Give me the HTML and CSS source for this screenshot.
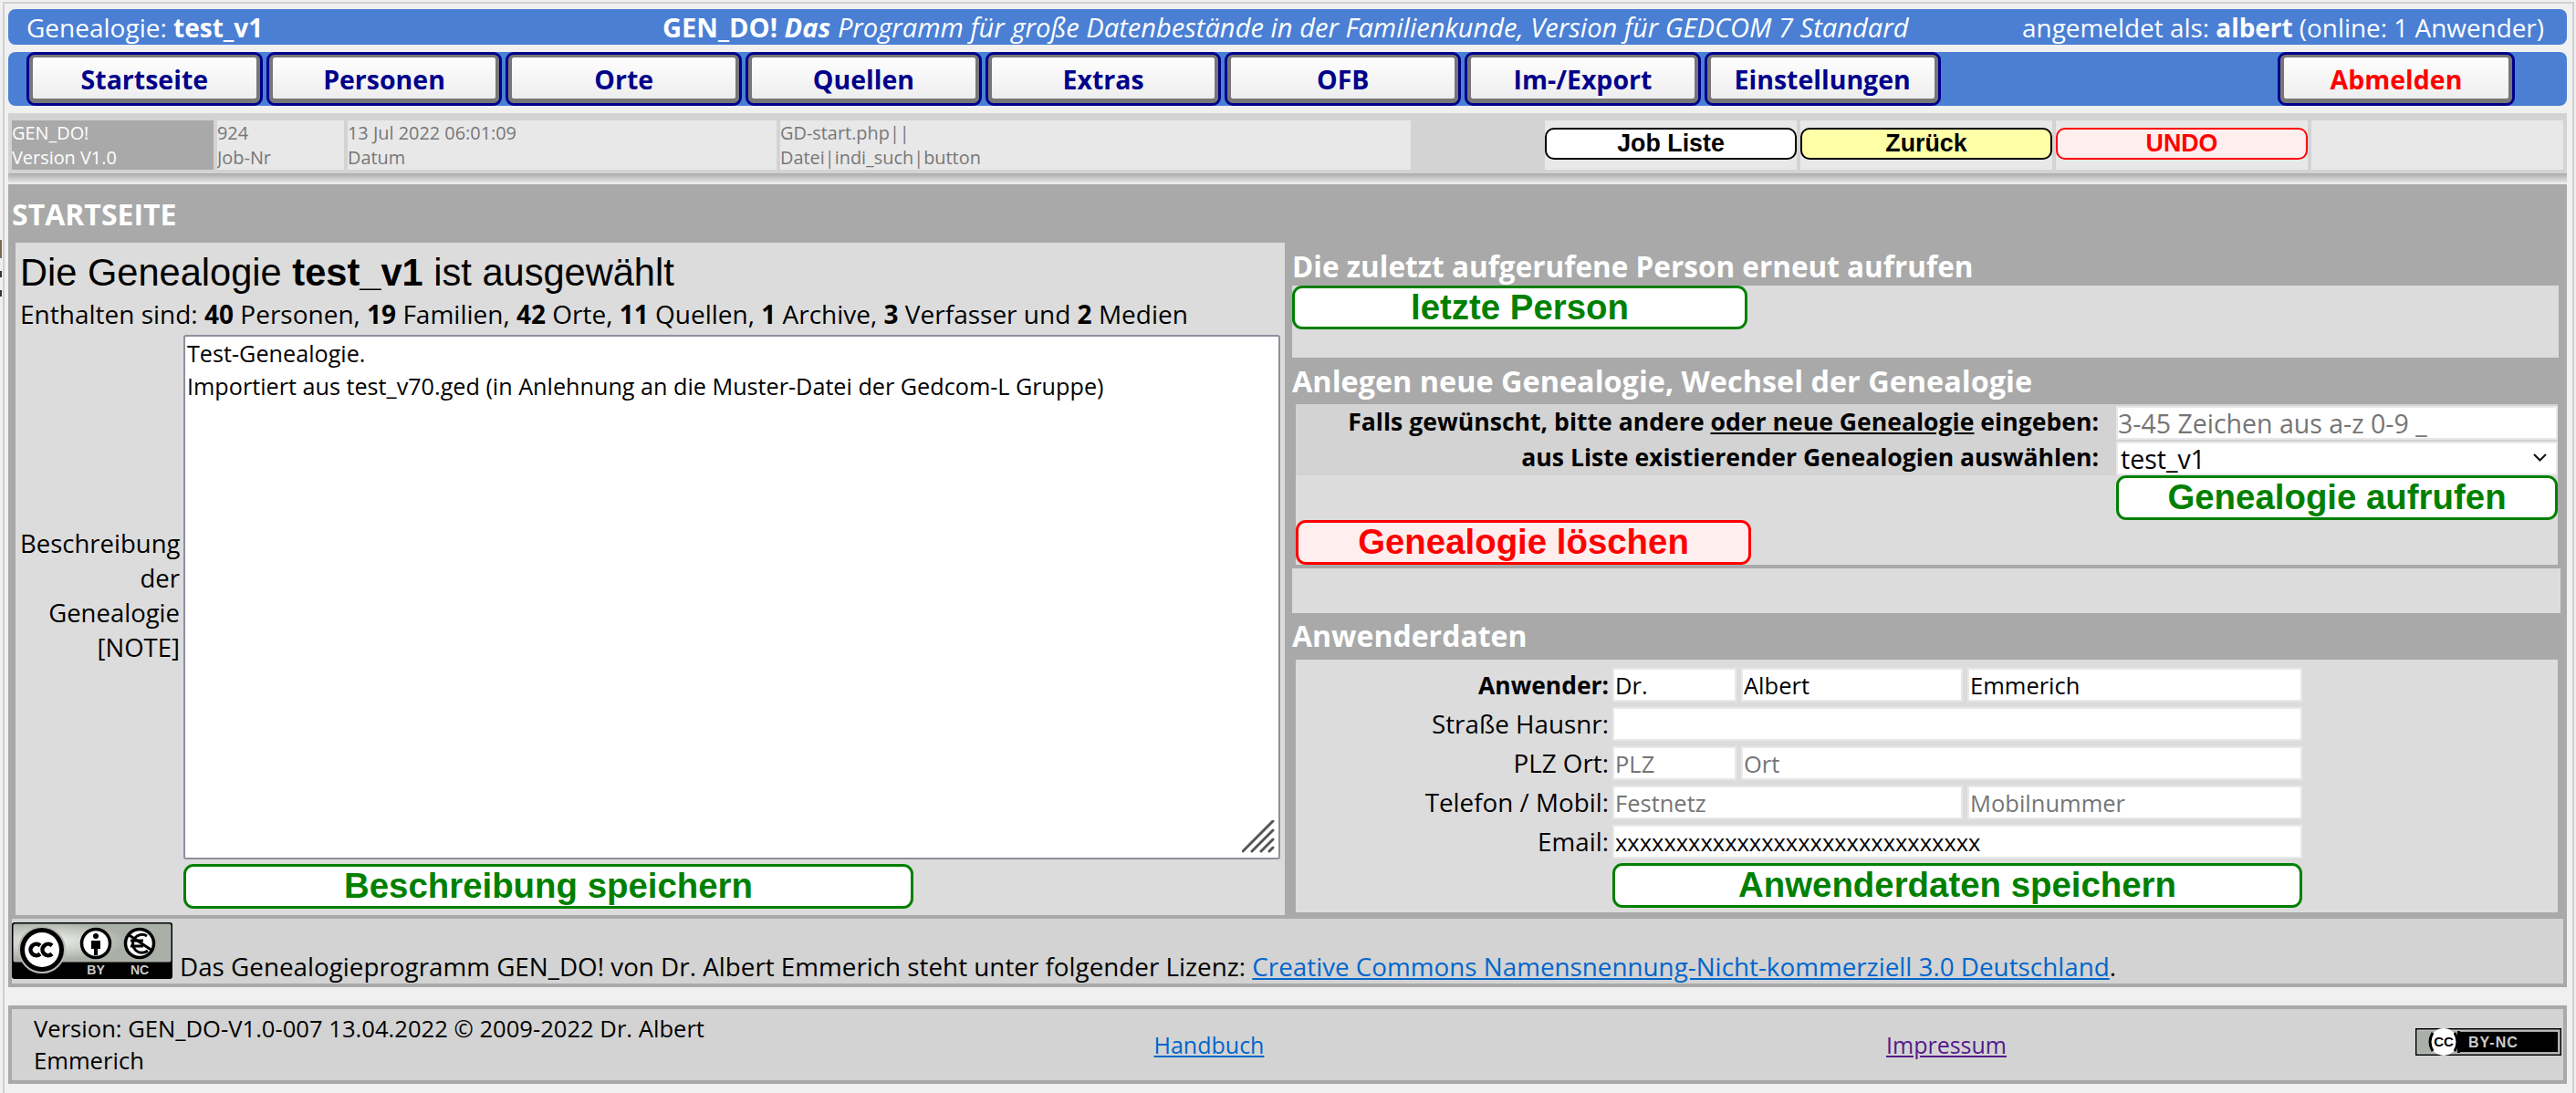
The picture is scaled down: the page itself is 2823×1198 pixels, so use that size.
FILE: index.html
```html
<!DOCTYPE html>
<html lang="de">
<head>
<meta charset="utf-8">
<title>GEN_DO! Startseite</title>
<link rel="stylesheet" href="styles.css">
</head>
<body>
<div class="edge-marks"><i></i><i></i><i></i></div>
<div class="frame">
  <header class="topbar">
    <div class="top-left">Genealogie: <b>test_v1</b></div>
    <div class="top-center"><b>GEN_DO! <i>Das</i></b> <i>Programm für große Datenbestände in der Familienkunde, Version für GEDCOM 7 Standard</i></div>
    <div class="top-right">angemeldet als: <b>albert</b> (online: 1 Anwender)</div>
  </header>
  <nav class="navbar">
    <a class="nav-btn">Startseite</a>
    <a class="nav-btn">Personen</a>
    <a class="nav-btn">Orte</a>
    <a class="nav-btn">Quellen</a>
    <a class="nav-btn">Extras</a>
    <a class="nav-btn">OFB</a>
    <a class="nav-btn">Im-/Export</a>
    <a class="nav-btn">Einstellungen</a>
    <a class="nav-btn logout">Abmelden</a>
  </nav>
  <section class="jobrow">
    <div class="cell cell-dark">GEN_DO!<br>Version V1.0</div>
    <div class="cell">924<br>Job-Nr</div>
    <div class="cell">13 Jul 2022 06:01:09<br>Datum</div>
    <div class="cell">GD-start.php||<br>Datei|indi_such|button</div>
    <div class="cell-empty"></div>
    <div class="cell cell-btn"><button class="job-btn white">Job Liste</button></div>
    <div class="cell cell-btn"><button class="job-btn yellow">Zurück</button></div>
    <div class="cell cell-btn"><button class="job-btn red">UNDO</button></div>
    <div class="cell"></div>
  </section>
  <div class="strip"></div>
  <main class="main">
    <h1 class="page-title">STARTSEITE</h1>
    <div class="columns">
      <section class="left">
        <h2 class="gen-title">Die Genealogie <b>test_v1</b> ist ausgewählt</h2>
        <p class="counts">Enthalten sind: <b>40</b> Personen, <b>19</b> Familien, <b>42</b> Orte, <b>11</b> Quellen, <b>1</b> Archive, <b>3</b> Verfasser und <b>2</b> Medien</p>
        <div class="note-row">
          <label class="note-label">Beschreibung<br>der<br>Genealogie<br>[NOTE]</label>
          <div class="note-wrap">
            <textarea class="note">Test-Genealogie.
Importiert aus test_v70.ged (in Anlehnung an die Muster-Datei der Gedcom-L Gruppe)</textarea>
            <svg class="grip" viewBox="0 0 36 36"><path d="M1 34L34 1M11 34L34 11M21 34L34 21M30 34L34 30"/></svg>
          </div>
        </div>
        <button class="act-btn green note-save">Beschreibung speichern</button>
      </section>
      <section class="right">
        <h3 class="sec-title first">Die zuletzt aufgerufene Person erneut aufrufen</h3>
        <div class="box box-last"><button class="act-btn green last-btn">letzte Person</button></div>
        <h3 class="sec-title second">Anlegen neue Genealogie, Wechsel der Genealogie</h3>
        <div class="box box-gen">
          <div class="gen-rows">
            <label class="gen-label"><b>Falls gewünscht, bitte andere <u>oder neue Genealogie</u> eingeben:</b></label>
            <input class="field gen-field" placeholder="3-45 Zeichen aus a-z 0-9 _">
            <label class="gen-label"><b>aus Liste existierender Genealogien auswählen:</b></label>
            <div class="select-wrap">
              <select class="field gen-field select"><option>test_v1</option></select>
              <svg class="chevron" viewBox="0 0 15 9"><path d="M1 1l6.5 6.5L14 1"/></svg>
            </div>
          </div>
          <div class="gen-open"><button class="act-btn green open-btn">Genealogie aufrufen</button></div>
          <button class="act-btn danger del-btn">Genealogie löschen</button>
        </div>
        <div class="box box-empty"></div>
        <h3 class="sec-title third">Anwenderdaten</h3>
        <div class="box box-user">
          <div class="user-grid">
            <label class="u-label"><b>Anwender:</b></label>
            <div class="u-row"><input class="field w-a" value="Dr."><input class="field w-b" value="Albert"><input class="field w-c" value="Emmerich"></div>
            <label class="u-label">Straße Hausnr:</label>
            <div class="u-row"><input class="field w-full"></div>
            <label class="u-label">PLZ Ort:</label>
            <div class="u-row"><input class="field w-a" placeholder="PLZ"><input class="field w-ort" placeholder="Ort"></div>
            <label class="u-label">Telefon / Mobil:</label>
            <div class="u-row"><input class="field w-tel" placeholder="Festnetz"><input class="field w-c" placeholder="Mobilnummer"></div>
            <label class="u-label">Email:</label>
            <div class="u-row"><input class="field w-full" value="xxxxxxxxxxxxxxxxxxxxxxxxxxxxxx"></div>
            <span></span>
            <button class="act-btn green user-save">Anwenderdaten speichern</button>
          </div>
        </div>
      </section>
    </div>
  </main>
  <section class="license">
    <svg class="cc-big" viewBox="0 0 176 62" aria-label="CC BY-NC">
      <defs>
        <radialGradient id="halo" cx="0.22" cy="0.45" r="0.5">
          <stop offset="0" stop-color="#f4f5f2"/><stop offset="0.5" stop-color="#d0d3cc"/><stop offset="1" stop-color="#aab0a8"/>
        </radialGradient>
      </defs>
      <rect x="0" y="0" width="176" height="62" rx="3" fill="#000"/>
      <rect x="1.5" y="1.5" width="173" height="42" rx="2" fill="url(#halo)"/>
      <circle cx="33" cy="30" r="25" fill="#000" stroke="#b5b9b2" stroke-width="2"/>
      <circle cx="33" cy="30" r="19" fill="#fff"/>
      <path class="cc-c" d="M31 25.5a6.2 6.2 0 1 0 0 9"/>
      <path class="cc-c" d="M44 25.5a6.2 6.2 0 1 0 0 9"/>
      <circle cx="92" cy="23" r="15.5" fill="#fff" stroke="#000" stroke-width="3.5"/>
      <circle cx="92" cy="15" r="3" fill="#000"/>
      <path d="M87 20h10v9h-3v7h-4v-7h-3z" fill="#000"/>
      <circle cx="140" cy="23" r="15.5" fill="#fff" stroke="#000" stroke-width="3.5"/>
      <path class="cc-e" d="M148 15a10 10 0 1 0 1 16M130 20h14M130 26h14"/>
      <path class="cc-e" d="M127 13l27 18"/>
      <text class="cc-txt" x="92" y="57" text-anchor="middle">BY</text>
      <text class="cc-txt" x="140" y="57" text-anchor="middle">NC</text>
    </svg>
    <span class="lic-text">Das Genealogieprogramm GEN_DO! von Dr. Albert Emmerich steht unter folgender Lizenz: <a class="lic-link" href="#">Creative Commons Namensnennung-Nicht-kommerziell 3.0 Deutschland</a>.</span>
  </section>
  <footer class="footer">
    <div class="foot-version">Version: GEN_DO-V1.0-007 13.04.2022 © 2009-2022 Dr. Albert Emmerich</div>
    <div class="foot-link"><a class="link-blue" href="#">Handbuch</a></div>
    <div class="foot-link"><a class="link-visited" href="#">Impressum</a></div>
    <span></span>
    <svg class="cc-small" viewBox="0 0 160 30" aria-label="CC BY-NC">
      <rect width="160" height="30" fill="#000"/>
      <rect x="2" y="2" width="156" height="26" fill="#aab0a8" stroke="#ccc" stroke-width="1"/>
      <rect x="48" y="4" width="108" height="22" fill="#000"/>
      <circle cx="31" cy="15" r="15" fill="#fff"/>
      <rect x="46" y="3" width="3" height="24" fill="#000"/>
      <path class="cc-s" d="M19 5q-6 10 0 20M43 5q6 10 0 20"/>
      <text class="cc-txt-s" x="31" y="20" text-anchor="middle">CC</text>
      <text class="cc-txt-w" x="58" y="21">BY-NC</text>
    </svg>
  </footer>
</div>
</body>
</html>
```
FILE: styles.css
```css
* { box-sizing: border-box; }
html, body { margin: 0; padding: 0; }
body {
  background: #f0f0f0;
  font-family: "Open Sans", "Noto Sans", sans-serif;
  font-size: 28px;
  color: #000;
  overflow: hidden;
}
.edge-marks {
  position: absolute;
  left: 0;
  top: 263px;
  width: 2px;
  height: 62px;
  display: flex;
  flex-direction: column;
  gap: 14px;
}
.edge-marks i { display: block; height: 7px; background: #333; }
.edge-marks i:first-child { height: 20px; background: #7a6a50; }
.frame {
  margin: 2px 2px 0 3px;
  border: 2px solid #d0d0d0;
  border-bottom: 0;
  padding: 6px 6px 0 4px;
  height: 1196px;
}
.topbar {
  display: grid;
  grid-template-columns: 717px 1fr auto;
  align-items: center;
  height: 39px;
  background: #4a7fd4;
  border-radius: 8px;
  color: #fff;
  margin-bottom: 8px;
  white-space: nowrap;
}
.top-left { padding-left: 20px; }
.top-center { font-size: 29.1px; }
.top-right { padding-right: 25px; font-size: 27.9px; }
.navbar {
  display: flex;
  gap: 4px;
  height: 59px;
  background: #4a7fd4;
  border-radius: 8px;
  padding: 0 57px 0 20px;
  margin-bottom: 8px;
}
.nav-btn {
  width: 258.7px;
  display: flex;
  align-items: center;
  justify-content: center;
  border: 3.5px solid #00008b;
  border-radius: 9px;
  box-shadow: inset 0 0 0 3px #777, inset 0 -1px 0 4px #777;
  background: linear-gradient(#fff, #ececec);
  color: #00008b;
  font-weight: 700;
  font-size: 28.5px;
}
.nav-btn.logout { margin-left: auto; color: #f00; width: 260px; }
.jobrow {
  display: grid;
  grid-template-columns: 221px 139px 470px 691px 139px 276px 276px 276px 1fr;
  column-gap: 4px;
  height: 66px;
  background: #d3d3d3;
  padding: 8px 4px 4px;
}
.cell {
  background: #e8e8e8;
  color: #777;
  font-size: 19.9px;
  line-height: 27px;
  white-space: nowrap;
  overflow: hidden;
}
.cell-dark { background: #a9a9a9; color: #fff; }
.cell-btn { display: flex; align-items: center; }
.job-btn {
  width: 100%;
  height: 35px;
  border: 2.5px solid #000;
  border-radius: 10px;
  font: 700 26.8px/1 "Liberation Sans", Arial, sans-serif;
  padding: 0;
  margin-top: -4px;
  color: #000;
}
.job-btn.white { background: #fff; }
.job-btn.yellow { background: #ffffa8; }
.job-btn.red { background: #ffeeee; border-color: #f00; color: #f00; }
.strip { height: 12px; background: linear-gradient(#aaa, #f0f0f0); }
.main { background: #a9a9a9; height: 801px; padding-top: 1px; }
.page-title {
  margin: 0;
  height: 63px;
  padding: 13px 0 0 4px;
  font-size: 32px;
  line-height: 38px;
  font-weight: 700;
  color: #fff;
}
.columns { display: flex; }
.left {
  width: 1391px;
  height: 737px;
  margin-left: 8px;
  background: #dcdcdc;
  padding-left: 5px;
}
.gen-title {
  margin: 0;
  padding-top: 11px;
  font: 400 41.6px/44px "Liberation Sans", Arial, sans-serif;
}
.counts { margin: 0; padding-top: 6px; height: 46px; line-height: 34px; white-space: nowrap; }
.note-row { display: flex; height: 575px; }
.note-label {
  width: 175px;
  align-self: center;
  text-align: right;
  line-height: 38px;
  flex: none;
  font-size: 27.5px;
  padding-bottom: 4px;
}
.note-wrap { position: relative; margin-left: 4px; width: 1202px; height: 575px; }
.note {
  display: block;
  width: 100%;
  height: 100%;
  margin: 0;
  border: 2px solid #8f8f9d;
  border-radius: 3px;
  padding: 0 2px;
  font: 25.2px/36px "Open Sans", sans-serif;
  background: #fff;
  resize: none;
}
.grip {
  position: absolute;
  right: 6px;
  bottom: 7px;
  width: 36px;
  height: 36px;
}
.grip path { fill: none; stroke: #555; stroke-width: 3; stroke-linecap: round; }
.act-btn {
  font: 700 38.4px/1 "Liberation Sans", Arial, sans-serif;
  background: #fff;
  height: 49px;
  border: 3px solid #008000;
  border-radius: 11px;
  padding: 0;
  color: #008000;
}
.act-btn.danger { background: #ffeeee; border-color: #f00; color: #f00; }
.note-save { display: block; width: 800px; margin: 5px 0 0 179px; }
.right { width: 1390px; margin-left: 8px; }
.sec-title {
  margin: 0;
  font-size: 32px;
  font-weight: 700;
  color: #fff;
  white-space: nowrap;
}
.sec-title.first { height: 47px; line-height: 51px; font-size: 31.5px; }
.sec-title.second { height: 51px; line-height: 51px; font-size: 32.4px; }
.sec-title.third { height: 51px; line-height: 50px; }
.box { background: #dcdcdc; }
.box-last { height: 79px; width: 1388px; }
.last-btn { display: block; width: 499px; height: 48px; }
.box-gen { width: 1383px; height: 176px; margin-left: 4px; }
.gen-rows {
  display: grid;
  grid-template-columns: 899px 484px;
  grid-auto-rows: 39px;
  background: #d3d3d3;
  padding: 0;
  height: 78px;
}
.gen-label { text-align: right; padding-right: 19px; line-height: 39px; white-space: nowrap; font-size: 26.6px; }
.field {
  height: 37px;
  margin: 0;
  border: 2px solid #e8e8e8;
  background: #fff;
  padding: 0 1px;
  font: 25.5px "Open Sans", sans-serif;
  color: #000;
  border-radius: 0;
  outline: 0;
}
.gen-field { width: 484px; margin-top: 2px; font-size: 28.5px; padding: 0; }
.select-wrap { position: relative; }
.select { padding-left: 3px; appearance: none; display: block; line-height: 30px; }
.chevron {
  position: absolute;
  left: 457px;
  top: 15px;
  width: 15px;
  height: 9px;
}
.chevron path { fill: none; stroke: #111; stroke-width: 2; }
.gen-open { display: flex; justify-content: flex-end; }
.open-btn { width: 484px; }
.del-btn { display: block; width: 499px; }
.box-empty { width: 1390px; height: 49px; margin-top: 4px; }
.box-user { width: 1383px; height: 277px; margin-left: 4px; padding-top: 9px; }
.user-grid {
  display: grid;
  grid-template-columns: 343px 756px;
  grid-auto-rows: 37px;
  row-gap: 6px;
  column-gap: 4px;
}
.u-label { text-align: right; line-height: 37px; white-space: nowrap; font-size: 27.8px; }
.u-label b { font-size: 26.4px; }
.u-row { display: flex; gap: 5px; }
.w-a { width: 136px; }
.w-b { width: 243px; }
.w-c { width: 367px; }
.w-ort { width: 615px; }
.w-tel { width: 384px; }
.w-full { width: 756px; }
.user-save { width: 756px; height: 49px; margin-top: -1px; }
.license {
  height: 79px;
  border: 4px solid #a9a9a9;
  background: #d3d3d3;
  display: flex;
  align-items: flex-end;
  white-space: nowrap;
}
.cc-big { width: 176px; height: 62px; flex: none; margin: 0 8px 5px 0; }
.cc-c { fill: none; stroke: #000; stroke-width: 4.5; }
.cc-e { fill: none; stroke: #000; stroke-width: 3; }
.cc-txt { font: 700 14px "Liberation Sans", sans-serif; fill: #ccc; }
.lic-text { line-height: 38px; font-size: 27.8px; }
.lic-link { color: #0066cc; }
.footer {
  margin-top: 20px;
  height: 86px;
  border: 4px solid #a9a9a9;
  background: #d3d3d3;
  display: grid;
  grid-template-columns: 780px 1016px 600px 1fr auto;
  align-items: center;
  padding: 0 2px 0 24px;
  font-size: 25.6px;
}
.foot-version { line-height: 35px; }
.foot-link { text-align: center; font-size: 25px; }
.link-blue { color: #0066cc; }
.link-visited { color: #551a8b; }
.cc-small { width: 160px; height: 30px; margin-top: -6px; }
.cc-s { fill: none; stroke: #000; stroke-width: 3; }
.cc-txt-s { font: 700 15px "Liberation Sans", sans-serif; fill: #000; }
.cc-txt-w { font: 700 16px "Liberation Sans", sans-serif; fill: #ccc; letter-spacing: 1px; }
```
